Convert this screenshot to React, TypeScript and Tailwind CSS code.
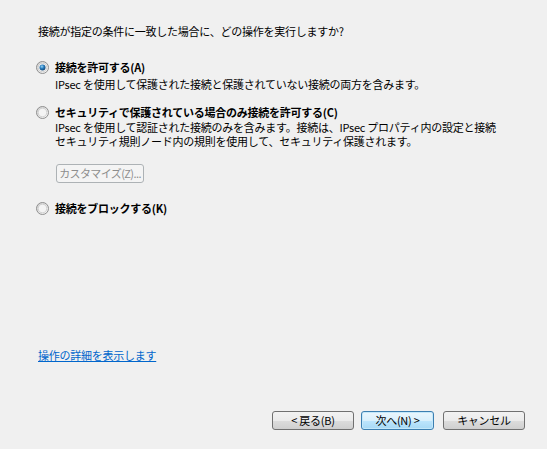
import React, { useState } from "react";

const FONT = "font-['Noto_Sans_CJK_JP','Noto_Sans',sans-serif]";

const Radio: React.FC<{ checked: boolean }> = ({ checked }) => (
  <svg width="13" height="13" viewBox="0 0 13 13" className="shrink-0">
    <defs>
      <linearGradient id="rbg" x1="0" y1="0" x2="1" y2="1">
        <stop offset="0" stopColor="#cfcfcf" />
        <stop offset="1" stopColor="#fbfbfb" />
      </linearGradient>
      <radialGradient id="rdot" cx="0.4" cy="0.35" r="0.7">
        <stop offset="0" stopColor="#9fd8f6" />
        <stop offset="0.45" stopColor="#2b7fc0" />
        <stop offset="1" stopColor="#0e3f6e" />
      </radialGradient>
    </defs>
    <circle cx="6.5" cy="6.5" r="6" fill="url(#rbg)" stroke="#8f8f8f" strokeWidth="1" />
    <circle cx="6.5" cy="6.5" r="4.3" fill="#f4f4f4" stroke="#c9c9c9" strokeWidth="0.8" />
    {checked && <circle cx="6.5" cy="6.5" r="3" fill="url(#rdot)" />}
  </svg>
);

const Option: React.FC<{
  checked: boolean;
  label: string;
  onSelect: () => void;
  children?: React.ReactNode;
}> = ({ checked, label, onSelect, children }) => (
  <div className="flex flex-col">
    <button
      type="button"
      onClick={onSelect}
      className="flex items-center h-[13px] pl-[36px] text-left"
    >
      <Radio checked={checked} />
      <span className="ml-[6px] font-bold text-[11px] leading-[13px] tracking-[-0.25px] text-black whitespace-nowrap">
        {label}
      </span>
    </button>
    {children}
  </div>
);

const btnGray =
  "h-[19px] border border-[#707070] rounded-[3px] bg-[linear-gradient(to_bottom,#f2f2f2_0%,#ebebeb_50%,#dddddd_50%,#cfcfcf_100%)] text-[11px] leading-[17px] whitespace-nowrap";

export default function App() {
  const [choice, setChoice] = useState<"allow" | "secure" | "block">("allow");

  return (
    <div
      className={`${FONT} w-[547px] h-[449px] bg-[#f0f0f0] text-black flex flex-col overflow-hidden tracking-[-0.25px]`}
    >
      <p className="mt-[25px] ml-[38px] text-[11px] leading-[13px]">
        接続が指定の条件に一致した場合に、どの操作を実行しますか?
      </p>

      <div className="mt-[23px]">
        <Option
          checked={choice === "allow"}
          label="接続を許可する(A)"
          onSelect={() => setChoice("allow")}
        >
          <p className="mt-[4px] ml-[55px] text-[11px] leading-[13px]">
            IPsec を使用して保護された接続と保護されていない接続の両方を含みます。
          </p>
        </Option>
      </div>

      <div className="mt-[15px]">
        <Option
          checked={choice === "secure"}
          label="セキュリティで保護されている場合のみ接続を許可する(C)"
          onSelect={() => setChoice("secure")}
        >
          <p className="mt-[1px] ml-[55px] text-[11px] leading-[14px] whitespace-nowrap">
            IPsec を使用して認証された接続のみを含みます。接続は、IPsec プロパティ内の設定と接続
            <br />
            セキュリティ規則ノード内の規則を使用して、セキュリティ保護されます。
          </p>
          <div className="mt-[16px] ml-[56px] flex">
            <button
              type="button"
              disabled
              className="w-[88px] h-[19px] px-0 border border-[#adb2b5] rounded-[3px] bg-[#f4f4f4] text-[11px] leading-[17px] tracking-[-0.6px] text-[#8d8d8d] whitespace-nowrap"
            >
              カスタマイズ(Z)...
            </button>
          </div>
        </Option>
      </div>

      <div className="mt-[19px]">
        <Option
          checked={choice === "block"}
          label="接続をブロックする(K)"
          onSelect={() => setChoice("block")}
        />
      </div>

      <div className="flex-1" />

      <div className="ml-[38px] h-[13px]">
        <a href="#" className="text-[11px] leading-[13px] text-[#0066cc] underline">
          操作の詳細を表示します
        </a>
      </div>

      <div className="mt-[57px] mb-[19px] flex justify-end pr-[22px]">
        <button type="button" className={`w-[82px] ${btnGray}`}>
          &lt; 戻る(B)
        </button>
        <button
          type="button"
          className="ml-[7px] w-[73px] h-[19px] border border-[#3c7fb1] rounded-[3px] bg-[linear-gradient(to_bottom,#eaf6fd_0%,#d9f0fc_50%,#bee6fd_50%,#a7d9f5_100%)] shadow-[inset_0_0_0_1px_#c4e8fa] text-[11px] leading-[17px] whitespace-nowrap"
        >
          次へ(N) &gt;
        </button>
        <button type="button" className={`ml-[9px] w-[82px] ${btnGray}`}>
          キャンセル
        </button>
      </div>
    </div>
  );
}
